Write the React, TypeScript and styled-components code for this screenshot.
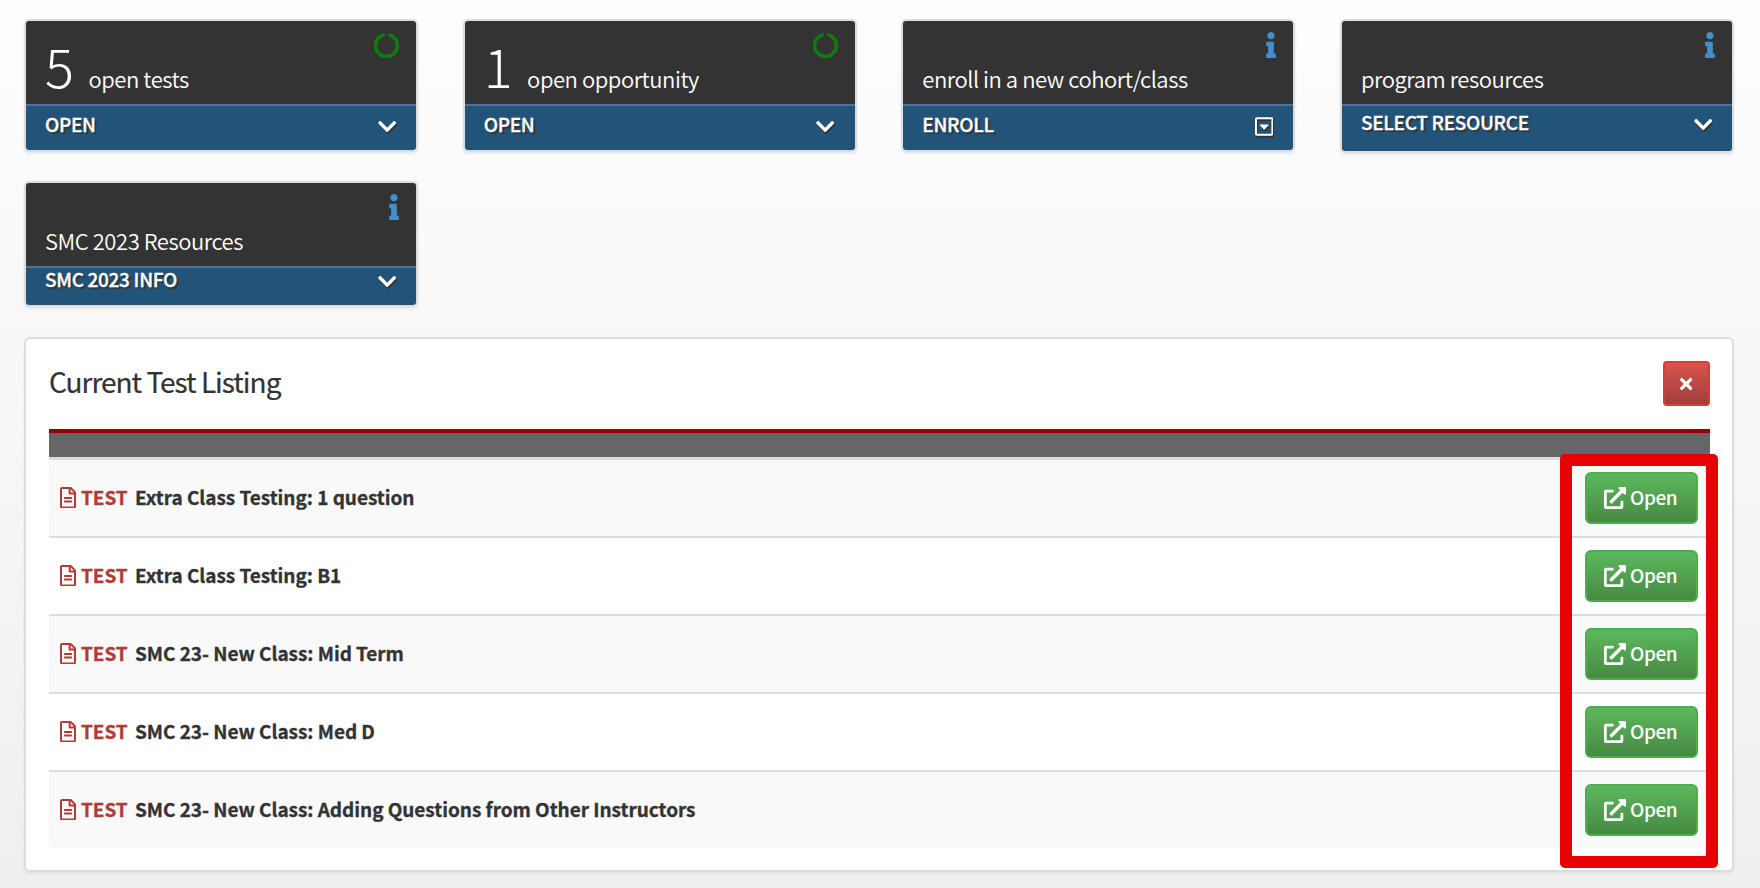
import styled, { createGlobalStyle } from "styled-components";
import { FaCircleNotch } from "react-icons/fa6";
import {
  FaChevronDown,
  FaExternalLinkAlt,
  FaInfo,
  FaRegCaretSquareDown,
  FaRegFileAlt,
  FaTimes,
} from "react-icons/fa";

const GlobalStyle = createGlobalStyle`
  * {
    box-sizing: border-box;
  }
  body {
    margin: 0;
    font-family: "Noto Sans CJK SC", "Noto Sans", sans-serif;
    color: #333;
  }
  svg {
    flex-shrink: 0;
  }
`;

const Page = styled.main`
  height: 888px;
  padding: 19px 26px 0 24px;
  overflow: hidden;
  background: linear-gradient(#fefefe, #efefef);
`;

const CardGrid = styled.section`
  display: grid;
  grid-template-columns: repeat(4, 394px);
  justify-content: space-between;
  align-items: start;
  row-gap: 28px;
`;

const Card = styled.article`
  border: 2px solid #ddd;
  border-radius: 5px;
  overflow: hidden;
  box-shadow: 0 2px 3px rgba(0, 0, 0, 0.08);
`;

const CardTop = styled.div`
  display: flex;
  justify-content: space-between;
  height: 83px;
  padding: 0 17px 0 19px;
  background-color: #333;
  color: #fff;
`;

const CardLabel = styled.div`
  font-size: 22px;
  font-weight: 350;
  line-height: 0;
  letter-spacing: -0.45px;
  white-space: nowrap;

  /* strut that keeps every label on the same baseline */
  &::before {
    content: "";
    display: inline-block;
    height: 67px;
  }
`;

const Count = styled.span`
  margin-right: 15px;
  font-size: 54px;
  font-weight: 300;
`;

const SpinnerIcon = styled(FaCircleNotch)`
  width: 25px;
  height: 25px;
  margin-top: 12px;
  color: #107c10;
  stroke-width: 14px;
`;

const InfoIcon = styled(FaInfo)`
  width: 10px;
  height: 26px;
  margin-top: 11px;
  color: #428fcf;
`;

const CardAction = styled.a<{ $height: number; $text: number }>`
  display: flex;
  justify-content: space-between;
  height: ${({ $height }) => $height}px;
  padding: 0 20px 0 19px;
  border-top: 2px solid #4a749b;
  background-color: #225479;
  color: #fff;
  font-size: 19px;
  font-weight: 500;
  line-height: ${({ $text }) => $text}px;
  letter-spacing: -0.32px;
  text-shadow: 2px 2px 1px #333;
  -webkit-text-stroke: 0.3px #fff;

  svg {
    width: 18.4px;
    height: 21px;
    margin-top: ${({ $text }) => ($text - 17) / 2}px;
    filter: drop-shadow(1px 2px 0 #333);
  }
`;

const Panel = styled.section`
  position: relative;
  height: 535px;
  margin-top: 30px;
  padding: 22px 22px 0 23px;
  border: 2px solid #ddd;
  border-radius: 6px;
  background-color: #fff;
  box-shadow: 0 2px 3px rgba(0, 0, 0, 0.06);
`;

const PanelHeader = styled.header`
  display: flex;
  justify-content: space-between;
  height: 68px;
`;

const Title = styled.h2`
  margin: 0;
  font-size: 28px;
  font-weight: 400;
  line-height: 41px;
  letter-spacing: -1px;
  -webkit-text-stroke: 0.2px #333;
`;

const CloseButton = styled.button`
  display: flex;
  align-items: center;
  justify-content: center;
  width: 47px;
  height: 45px;
  padding: 0;
  border: 2px solid #d43f3a;
  border-radius: 4px;
  background: linear-gradient(#d9534f, #a03f3b);
  color: #fff;

  svg {
    width: 12.4px;
    height: 18px;
    margin: 1px 1px 0 0;
  }
`;

const TableBar = styled.div`
  height: 28px;
  border-top: 4px solid #900;
  background-color: #666;
`;

const TestList = styled.ul`
  margin: 0;
  padding: 0;
  border-top: 1px solid #ddd;
  list-style: none;
`;

const TestRow = styled.li`
  display: flex;
  align-items: center;
  height: 78px;
  padding: 0 12px 0 11px;
  border-top: 2px solid #ddd;
  font-size: 19px;
  font-weight: 700;

  &:nth-child(odd) {
    background-color: #f9f9f9;
  }
  &:last-child {
    border-radius: 0 0 5px 5px;
  }
`;

const RowText = styled.span`
  padding-bottom: 3px;
  letter-spacing: -0.04px;
  -webkit-text-stroke: 0.3px currentColor;
`;

const TestTag = styled.span`
  display: flex;
  align-items: center;
  gap: 5px;
  width: 75px;
  color: #b03c38;

  svg {
    width: 16px;
    height: 21.5px;
    margin-bottom: 1px;
  }
`;

const OpenButton = styled.button`
  display: flex;
  align-items: center;
  gap: 4px;
  width: 113px;
  height: 52px;
  margin-left: auto;
  padding: 0 0 0 17px;
  border: 2px solid #4cae4c;
  border-radius: 6px;
  background: linear-gradient(#5cb85c, #468a43);
  color: #fff;
  font: inherit;
  font-weight: 500;

  svg {
    margin-bottom: 1px;
  }
`;

const OpenText = styled.span`
  padding-bottom: 3px;
  letter-spacing: -0.45px;
`;

// Callout frame drawn over the column of Open buttons
const Highlight = styled.div`
  position: absolute;
  top: 115px;
  right: 14px;
  width: 158px;
  height: 414px;
  border: 12px solid #e60202;
  border-radius: 5px;
  pointer-events: none;
`;

const cards = [
  { count: 5, label: "open tests", action: "OPEN", height: 46, text: 36 },
  { count: 1, label: "open opportunity", action: "OPEN", height: 46, text: 36 },
  { label: "enroll in a new cohort/class", action: "ENROLL", height: 46, text: 36, boxed: true },
  { label: "program resources", action: "SELECT RESOURCE", height: 47, text: 32 },
  { label: "SMC 2023 Resources", action: "SMC 2023 INFO", height: 39, text: 22 },
];

const tests = [
  "Extra Class Testing: 1 question",
  "Extra Class Testing: B1",
  "SMC 23- New Class: Mid Term",
  "SMC 23- New Class: Med D",
  "SMC 23- New Class: Adding Questions from Other Instructors",
];

export default function App() {
  return (
    <Page>
      <GlobalStyle />
      <CardGrid>
        {cards.map((card) => (
          <Card key={card.label}>
            <CardTop>
              <CardLabel>
                {card.count && <Count>{card.count}</Count>}
                <span>{card.label}</span>
              </CardLabel>
              {card.count ? <SpinnerIcon /> : <InfoIcon />}
            </CardTop>
            <CardAction $height={card.height} $text={card.text}>
              <span>{card.action}</span>
              {card.boxed ? <FaRegCaretSquareDown /> : <FaChevronDown />}
            </CardAction>
          </Card>
        ))}
      </CardGrid>

      <Panel>
        <PanelHeader>
          <Title>Current Test Listing</Title>
          <CloseButton aria-label="Close">
            <FaTimes />
          </CloseButton>
        </PanelHeader>
        <TableBar />
        <TestList>
          {tests.map((name) => (
            <TestRow key={name}>
              <TestTag>
                <FaRegFileAlt />
                <RowText>TEST</RowText>
              </TestTag>
              <RowText>{name}</RowText>
              <OpenButton>
                <FaExternalLinkAlt size={22} />
                <OpenText>Open</OpenText>
              </OpenButton>
            </TestRow>
          ))}
        </TestList>
        <Highlight />
      </Panel>
    </Page>
  );
}
